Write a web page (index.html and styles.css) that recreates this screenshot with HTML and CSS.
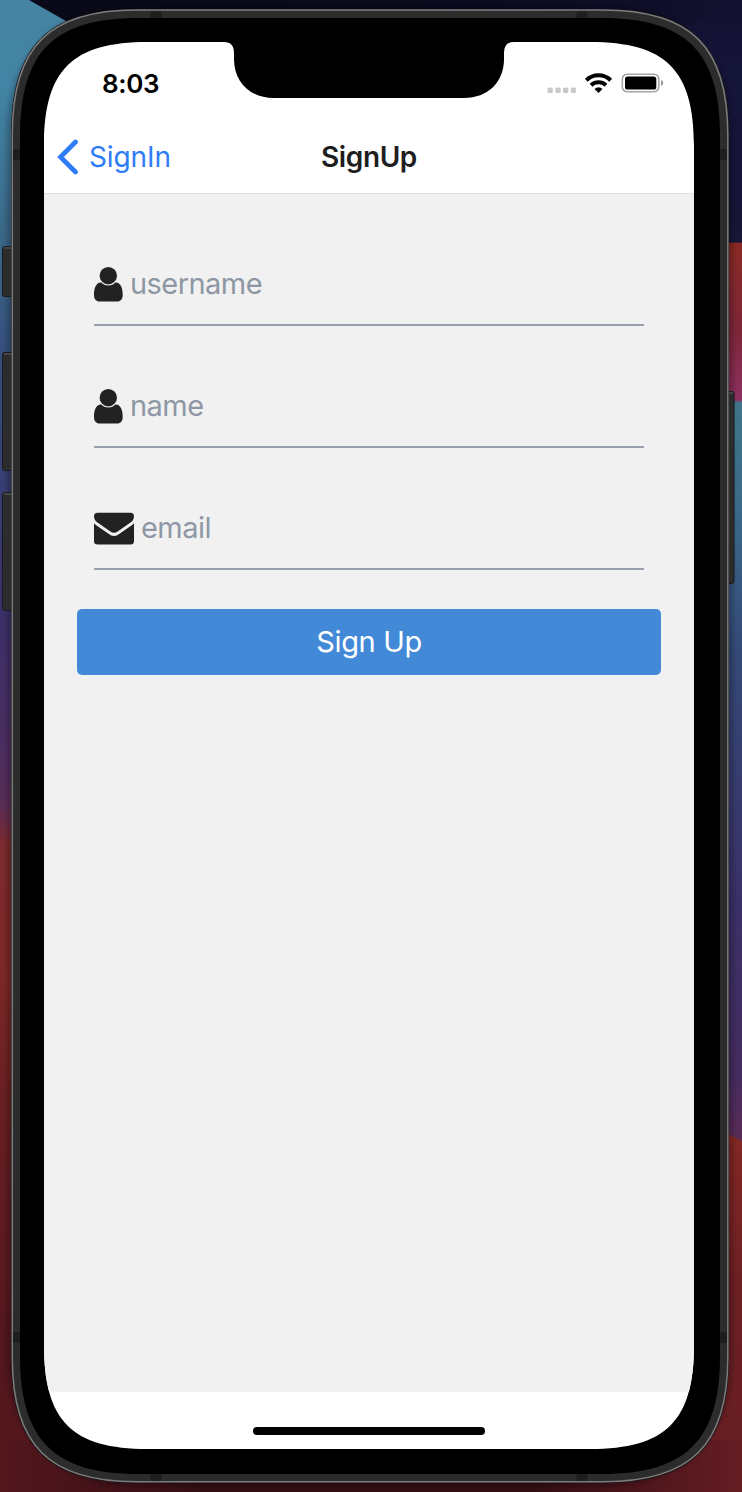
FILE: index.html
```html
<!DOCTYPE html>
<html lang="en">
<head>
<meta charset="utf-8">
<title>SignUp</title>
<link rel="stylesheet" href="styles.css">
</head>
<body>
<main class="desktop">
  <svg class="device" viewBox="0 0 742 1492" aria-hidden="true">
    <defs>
      <linearGradient id="left" x1="0" y1="0" x2="0" y2="1492" gradientUnits="userSpaceOnUse">
        <stop offset="0" stop-color="#4584a2"/><stop offset=".06" stop-color="#4284a4"/><stop offset=".16" stop-color="#3a6787"/>
        <stop offset=".25" stop-color="#354c7c"/><stop offset=".4" stop-color="#3a306a"/>
        <stop offset=".5" stop-color="#4c2e61"/><stop offset=".54" stop-color="#592d55"/>
        <stop offset=".565" stop-color="#7c2a2f"/><stop offset=".65" stop-color="#7d2926"/>
        <stop offset=".74" stop-color="#681f23"/><stop offset=".9" stop-color="#53171d"/><stop offset="1" stop-color="#53171d"/>
      </linearGradient>
      <linearGradient id="right" x1="0" y1="0" x2="0" y2="1492" gradientUnits="userSpaceOnUse">
        <stop offset="0" stop-color="#121130"/><stop offset=".05" stop-color="#15143a"/><stop offset=".1625" stop-color="#171638"/>
        <stop offset=".1626" stop-color="#8c2a25"/><stop offset=".22" stop-color="#7e2638"/><stop offset=".268" stop-color="#8e3060"/>
        <stop offset=".27" stop-color="#40768a"/><stop offset=".34" stop-color="#3c6b8a"/><stop offset=".43" stop-color="#344b79"/>
        <stop offset=".6" stop-color="#3a3168"/><stop offset=".72" stop-color="#452c60"/><stop offset=".757" stop-color="#572b58"/>
        <stop offset=".775" stop-color="#572b50"/>
      </linearGradient>
      <linearGradient id="ember" x1="0" y1="1134" x2="0" y2="1492" gradientUnits="userSpaceOnUse">
        <stop offset="0" stop-color="#842824"/><stop offset=".4" stop-color="#6e2023"/><stop offset="1" stop-color="#651d23"/>
      </linearGradient>
      <linearGradient id="floor">
        <stop offset="0" stop-color="#53171d"/><stop offset=".28" stop-color="#350e15"/><stop offset=".72" stop-color="#350e15"/><stop offset="1" stop-color="#651d23"/>
      </linearGradient>
      <linearGradient id="sky"><stop offset="0" stop-color="#090818"/><stop offset=".65" stop-color="#0c0b20"/><stop offset="1" stop-color="#121130"/></linearGradient>
      <filter id="soft"><feGaussianBlur stdDeviation="3"/></filter>
    </defs>
    <rect width="371" height="1492" fill="url(#left)"/>
    <rect x="371" width="371" height="1492" fill="url(#right)"/>
    <path d="M724 1132L742 1141V1492H600V1132Z" fill="url(#ember)"/>
    <path d="M29 0L66 21L100 60H620L742 0Z" fill="url(#sky)"/>
    <path d="M0 1440H742V1492H0Z" fill="url(#floor)"/>
    <path d="M11 134C11 56 58 9 136 9H604C682 9 729 56 729 134V1358C729 1436 682 1483 604 1483H136C58 1483 11 1436 11 1358Z" fill="none" stroke="#000" stroke-opacity=".4" stroke-width="5" filter="url(#soft)"/>
    <g fill="#2c2c2c" stroke="#191b20" stroke-width="1">
      <rect x="2.500" y="246.500" width="12" height="50" rx="2"/>
      <rect x="2.500" y="352.500" width="12" height="118" rx="2"/>
      <rect x="2.500" y="492.500" width="12" height="118" rx="2"/>
      <rect x="725" y="391.500" width="9" height="192" rx="2"/>
    </g>
    <path d="M4 248H12M4 354H12M4 494H12M728 393H733" stroke="#606060"/>
    <path d="M11 134C11 46 48 9 136 9H604C692 9 729 46 729 134V1358C729 1446 692 1483 604 1483H136C48 1483 11 1446 11 1358Z" fill="#191919"/>
    <path d="M12.300 134C12.300 47 49 10 136 10H603C691 10 727.800 47 727.800 134V1358C727.800 1445 691 1481.700 603 1481.700H136C49 1481.700 12.300 1445 12.300 1358Z" fill="#2c2c2c" stroke="#7c7c7c" stroke-width="1.500"/>
    <path d="M150.500 11.500h11v7h-11zM576.500 11.500h11v7h-11zM150.500 1473h11v8h-11zM576.500 1473h11v8h-11zM13 149h8v11h-8zM719 149h8v11h-8zM13 1332h8v11h-8zM719 1332h8v11h-8z" fill="#1e1e1e"/>
    <path d="M20 136C20 52 54 18 138 18H602C686 18 720 52 720 136V1356C720 1440 686 1474 602 1474H138C54 1474 20 1440 20 1356Z"/>
  </svg>
  <section class="screen">
    <header class="status">
      <span class="time">8:03</span>
      <svg class="indicators" width="118" height="24" viewBox="0 0 118 24" aria-hidden="true">
        <g fill="#c9c9c9"><rect x="1.500" y="15.500" width="5.400" height="5.400" rx="1.500"/><rect x="9.300" y="15.500" width="5.400" height="5.400" rx="1.500"/><rect x="17" y="15.500" width="5.400" height="5.400" rx="1.500"/><rect x="24.700" y="15.500" width="5.400" height="5.400" rx="1.500"/></g>
        <g fill="none" stroke="#000" stroke-width="4"><path d="M40.300 8.200A17.500 17.500 0 0 1 64.700 8.200"/><path d="M45 13.200A11 11 0 0 1 60 13.200"/></g>
        <path d="M48.500 17Q52.500 13.500 56.500 17L52.500 21Z"/>
        <rect x="76.300" y="2.200" width="36.500" height="17.600" rx="5" fill="none" stroke="#a5a5a5" stroke-width="1.600"/>
        <rect x="79" y="4.500" width="31.300" height="13" rx="2.600"/>
        <path d="M115 8Q117.300 8.800 117.300 11T115 14Z" fill="#999"/>
      </svg>
    </header>
    <nav class="navbar">
      <a class="back"><svg width="22" height="36" viewBox="0 0 22 36" aria-hidden="true"><path d="M18.500 3L3.500 18L18.500 33" fill="none" stroke="#2e7cf6" stroke-width="4.700" stroke-linecap="round" stroke-linejoin="miter"/></svg><span class="back-label">SignIn</span></a>
      <h1 class="title">SignUp</h1>
    </nav>
    <form class="form">
      <label class="field">
        <svg class="icon" width="29" height="35" viewBox="0 0 29 35" aria-hidden="true"><circle cx="14.300" cy="8.700" r="8.700"/><path d="M7.300 15.600C2.200 15.200 0 21 0 28C0 32.300 2.300 34.500 5.500 34.500H23.200C26.500 34.500 28.700 32.300 28.700 28C28.700 21 26.500 15.200 21.400 15.600C19.500 17.500 17.500 18.500 14.350 18.500S9.200 17.500 7.300 15.600Z"/></svg>
        <span class="placeholder">username</span>
      </label>
      <label class="field">
        <svg class="icon" width="29" height="35" viewBox="0 0 29 35" aria-hidden="true"><circle cx="14.300" cy="8.700" r="8.700"/><path d="M7.300 15.600C2.200 15.200 0 21 0 28C0 32.300 2.300 34.500 5.500 34.500H23.200C26.500 34.500 28.700 32.300 28.700 28C28.700 21 26.500 15.200 21.400 15.600C19.500 17.500 17.500 18.500 14.350 18.500S9.200 17.500 7.300 15.600Z"/></svg>
        <span class="placeholder">name</span>
      </label>
      <label class="field">
        <svg class="icon" width="40" height="33" viewBox="0 0 40 33" aria-hidden="true"><path d="M3.600 .8H36.400Q40 .8 40 4.400C40 7 38.500 9 36.500 10.500L24 19.200Q20 22.500 16 19.200L3.500 10.500C1.500 9 0 7 0 4.400Q0 .8 3.600 .8Z"/><path d="M0 11.300Q1 12.500 2.200 13.300L14.500 21.700Q20 26.200 25.500 21.700L37.800 13.300Q39 12.500 40 11.300V29Q40 32.600 36.400 32.600H3.600Q0 32.600 0 29Z"/></svg>
        <span class="placeholder">email</span>
      </label>
      <button class="submit" type="button"><span class="submit-label">Sign Up</span></button>
    </form>
    <footer class="home"><span class="home-bar"></span></footer>
  </section>
</main>
</body>
</html>
```

FILE: styles.css
```css
* { box-sizing: border-box; }
body { margin: 0; font-family: Inter, "Liberation Sans", sans-serif; }
.desktop { position: relative; width: 742px; height: 1492px; padding: 42px 48px 43px 44px; overflow: hidden; }
.device { position: absolute; inset: 0; width: 742px; height: 1492px; }
.screen {
  position: relative;
  display: flex;
  flex-direction: column;
  width: 650px;
  height: 1407px;
  background: #fff;
  clip-path: path("M0 104C0 28 28 0 104 0H180Q190 0 190 11V17C190 40 206 56 230 56H420C444 56 460 40 460 17V11Q460 0 470 0H546C622 0 650 28 650 104V1303C650 1379 622 1407 546 1407H104C28 1407 0 1379 0 1303Z");
}
.status { display: flex; justify-content: space-between; align-items: center; height: 78px; padding: 6px 30px 0 58px; }
.time { font-size: 26px; font-weight: 600; line-height: 32px; letter-spacing: -.4px; color: #000; }
.navbar { display: grid; grid-template-columns: 1fr auto 1fr; align-items: center; height: 73px; }
.back { display: flex; align-items: center; gap: 10px; padding-left: 13px; }
.back-label { padding-top: 1px; font-size: 28px; line-height: 34px; letter-spacing: -.1px; color: #2e7cf6; }
.title { margin: 0; font-size: 28px; line-height: 34px; font-weight: 600; letter-spacing: -.4px; color: #1e1e20; }
.form { flex: 1; padding: 51px 33px 0; background: #f1f1f1; border-top: 1px solid #e0e0e0; }
.field { display: flex; align-items: center; gap: 7px; height: 81px; margin: 0 17px 41px; border-bottom: 2px solid #97a2ae; }
.field:nth-of-type(3) { margin-bottom: 39px; }
.icon { fill: #222; flex: none; }
.placeholder { padding-bottom: 1px; font-size: 29px; line-height: 36px; letter-spacing: -.55px; color: #8d98a4; }
.submit { display: flex; justify-content: center; align-items: center; width: 584px; height: 66px; margin: 0; padding: 0; border: 0; border-radius: 5px; background: #4289d7; color: #fff; font: 400 29px/36px Inter, "Liberation Sans", sans-serif; letter-spacing: -.35px; }
.home { display: flex; justify-content: center; height: 57px; padding-top: 35px; }
.home-bar { width: 232px; height: 8px; border-radius: 4px; background: #000; }
```
